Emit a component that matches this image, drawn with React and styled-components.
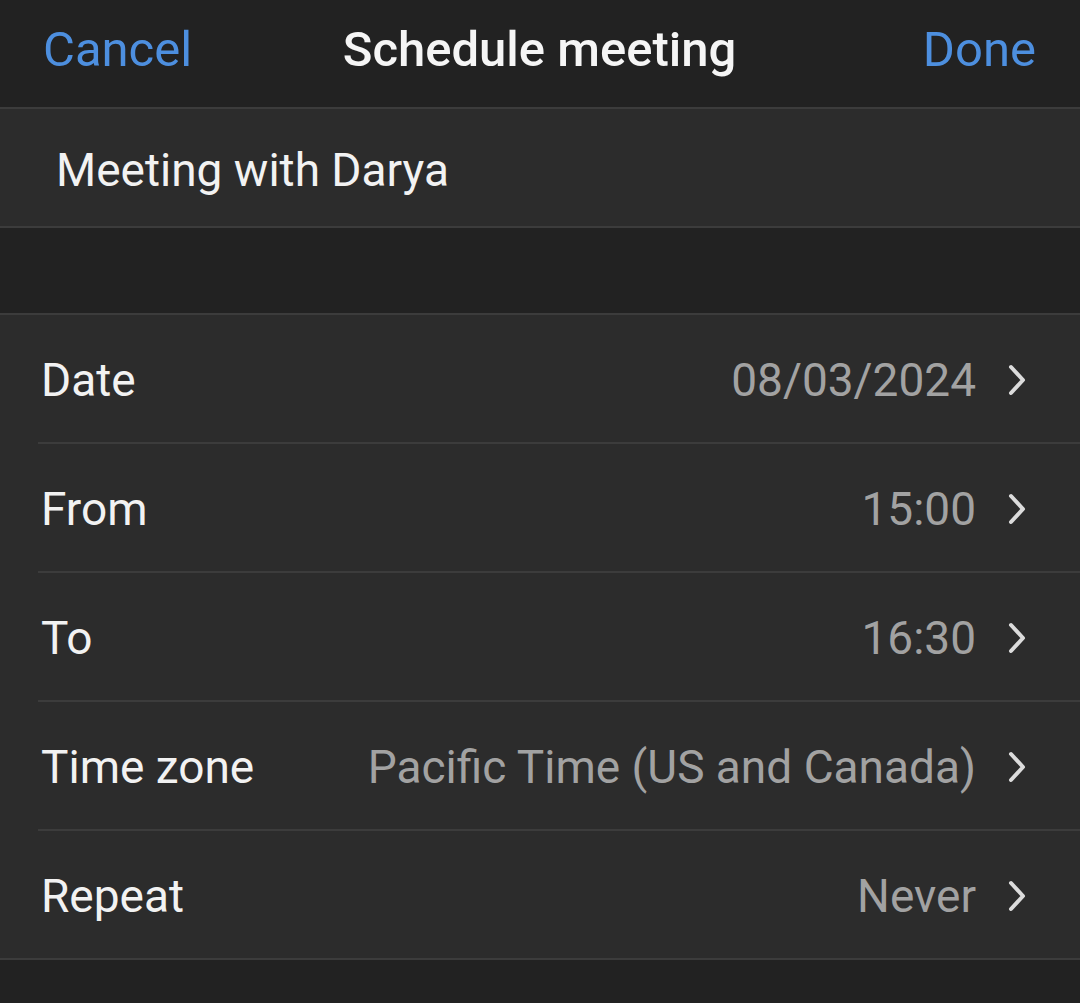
import React from "react";
import styled, { createGlobalStyle } from "styled-components";

const GlobalStyle = createGlobalStyle`
  html, body {
    margin: 0;
    padding: 0;
    background: #222222;
  }
  body {
    font-family: Roboto, "Noto Sans", "Liberation Sans", sans-serif;
    -webkit-font-smoothing: antialiased;
  }
`;

const rows = [
  { label: "Date", value: "08/03/2024" },
  { label: "From", value: "15:00" },
  { label: "To", value: "16:30" },
  { label: "Time zone", value: "Pacific Time (US and Canada)" },
  { label: "Repeat", value: "Never" },
];

const Chevron = () => (
  <svg width="22" height="34" viewBox="0 0 22 34" fill="none">
    <path
      d="M5 4 L17 17 L5 30"
      stroke="#dcdcdc"
      strokeWidth="4"
      strokeLinecap="round"
      strokeLinejoin="round"
    />
  </svg>
);

const App = () => {
  return (
    <Page>
      <GlobalStyle />
      <Header>
        <NavButton>Cancel</NavButton>
        <Title>Schedule meeting</Title>
        <NavButton $align="end">Done</NavButton>
      </Header>

      <TopicField>Meeting with Darya</TopicField>

      <Spacer />

      <Group>
        {rows.map((row) => (
          <Row key={row.label}>
            <Label>{row.label}</Label>
            <Value>{row.value}</Value>
            <ChevronWrap>
              <Chevron />
            </ChevronWrap>
          </Row>
        ))}
      </Group>
    </Page>
  );
};

export default App;

const Page = styled.div`
  width: 1080px;
  min-height: 1003px;
  background: #222222;
  display: flex;
  flex-direction: column;
`;

const Header = styled.div`
  height: 109px;
  box-sizing: border-box;
  padding: 0 44px 8px 43px;
  display: grid;
  grid-template-columns: 1fr auto 1fr;
  align-items: center;
  background: #222222;
  border-bottom: 2px solid #3c3c3c;
`;

const NavButton = styled.span`
  justify-self: ${(p) => (p.$align === "end" ? "end" : "start")};
  color: #4d8fdf;
  font-size: 49px;
  cursor: pointer;
`;

const Title = styled.span`
  color: #f5f5f5;
  font-size: 49px;
  font-weight: 500;
`;

const TopicField = styled.div`
  height: 119px;
  box-sizing: border-box;
  padding: 4px 56px 0;
  display: flex;
  align-items: center;
  background: #2c2c2c;
  color: #f2f2f2;
  font-size: 46px;
  border-bottom: 2px solid #3c3c3c;
`;

const Spacer = styled.div`
  height: 85px;
  background: #222222;
`;

const Group = styled.div`
  background: #2c2c2c;
  border-top: 2px solid #3c3c3c;
  border-bottom: 2px solid #3c3c3c;
`;

const Row = styled.div`
  height: 129px;
  box-sizing: border-box;
  margin-left: 38px;
  padding: 3px 52px 0 3px;
  display: flex;
  align-items: center;
  border-bottom: 2px solid #3c3c3c;

  &:last-child {
    border-bottom: none;
    height: 127px;
  }
`;

const Label = styled.span`
  color: #f2f2f2;
  font-size: 46px;
  flex: 0 0 auto;
`;

const Value = styled.span`
  flex: 1;
  text-align: right;
  color: #a2a2a2;
  font-size: 46px;
  margin-left: 24px;
`;

const ChevronWrap = styled.span`
  display: flex;
  align-items: center;
  margin-left: 30px;
`;
